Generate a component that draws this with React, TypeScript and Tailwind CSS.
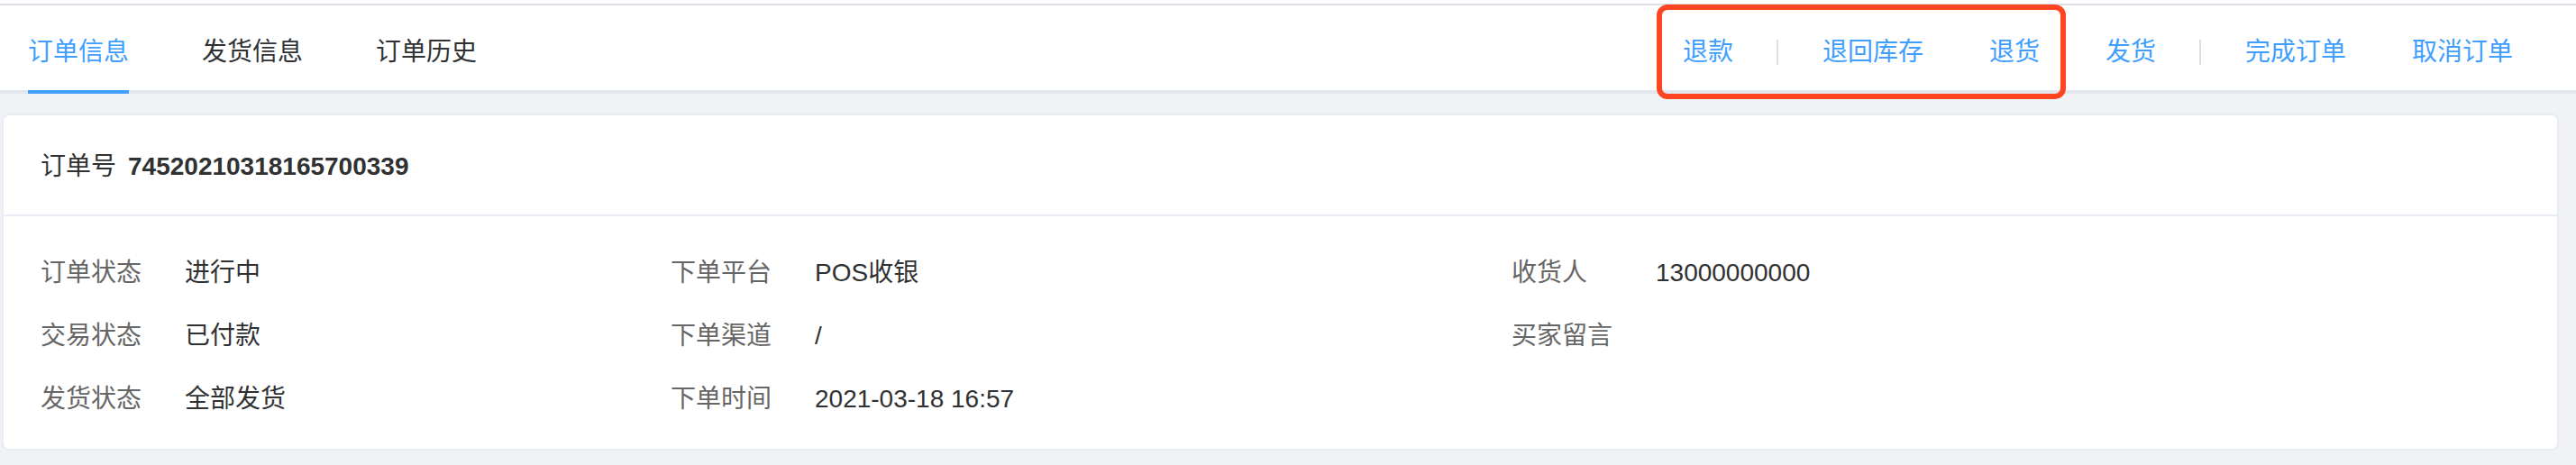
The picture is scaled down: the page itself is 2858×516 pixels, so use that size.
const tabs = ['订单信息', '发货信息', '订单历史']

const actionGroups = [['退款'], ['退回库存', '退货', '发货'], ['完成订单', '取消订单']]

const columns = [
  [
    ['订单状态', '进行中'],
    ['交易状态', '已付款'],
    ['发货状态', '全部发货'],
  ],
  [
    ['下单平台', 'POS收银'],
    ['下单渠道', '/'],
    ['下单时间', '2021-03-18 16:57'],
  ],
  [
    ['收货人', '13000000000'],
    ['买家留言', ''],
  ],
]

export default function App() {
  return (
    <div
      className="relative w-[2858px] h-[516px] bg-[#f0f2f5] text-[28px] text-[#303133]"
      style={{ fontFamily: '"Liberation Sans", "Noto Sans CJK SC", sans-serif' }}
    >
      {/* tab bar */}
      <div className="bg-white pt-[4px]">
        <div className="flex h-[100px] justify-between border-t-2 border-b-4 border-[#dcdfe6] border-b-[#e4e7ed]">
          <div className="flex gap-[81px] pl-[31px]">
            {tabs.map((t, i) => (
              <div
                key={t}
                className={
                  i === 0
                    ? 'flex items-center -mb-[4px] border-b-4 border-[#409eff] pt-[10px] text-[#409eff]'
                    : 'flex items-center pt-[10px] text-[#303133]'
                }
              >
                {t}
              </div>
            ))}
          </div>
          <div className="flex items-center pr-[33.5px] pt-[10px] text-[#409eff]">
            {actionGroups.map((group, gi) => (
              <div key={gi} className="flex items-center">
                {gi > 0 && <div className="mx-[12px] h-[28px] w-[2px] bg-[#dcdfe6]" />}
                {group.map((a) => (
                  <span key={a} className="px-[36.5px] cursor-pointer">
                    {a}
                  </span>
                ))}
              </div>
            ))}
          </div>
        </div>
      </div>

      {/* card */}
      <div className="pl-[2px] pr-[19px] pt-[22px]">
        <div className="rounded-[8px] border-2 border-[#e9ecf2] bg-white">
          <div className="flex h-[112px] items-center border-b-2 border-[#e9ecf2] pl-[41px] pt-[3px]">
            <span>订单号</span>
            <span className="ml-[13px] font-bold">74520210318165700339</span>
          </div>
          <div className="grid h-[258px] grid-cols-[699px_933px_1fr] pl-[41px] pt-[28px]">
            {columns.map((col, ci) => (
              <div key={ci} className="flex flex-col">
                {col.map(([label, value]) => (
                  <div key={label} className="flex h-[70px] items-center">
                    <span className="w-[160px] text-[#666666]">{label}</span>
                    <span>{value}</span>
                  </div>
                ))}
              </div>
            ))}
          </div>
        </div>
      </div>

      {/* annotation */}
      <div className="absolute left-[1838px] top-[5px] h-[105px] w-[454px] rounded-[12px] border-[6px] border-[#ff4422]" />
    </div>
  )
}
